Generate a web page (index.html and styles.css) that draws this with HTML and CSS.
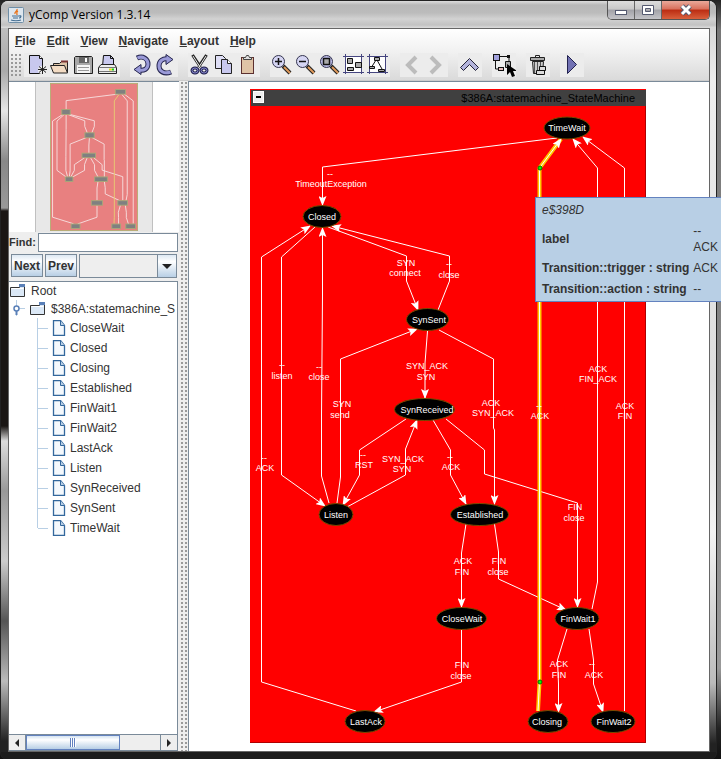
FILE: index.html
```html
<!DOCTYPE html>
<html lang="en">
<head>
    <meta charset="UTF-8">
    <meta name="viewport" content="width=device-width, initial-scale=1.0">
    <title>yComp Version 1.3.14</title>
    <link rel="stylesheet" href="styles.css">
</head>
<body>

<div class="window">
    <header class="titlebar">
        <svg class="app-icon" width="16" height="16" viewBox="0 0 16 16" aria-hidden="true">
            <rect x=".5" y=".5" width="15" height="15" rx="1" fill="#dde6ee" stroke="#6f8ea6"/>
            <path d="M9 2c1 2-3 3-2 5M10 4c-2 1-1 2-1 4" fill="none" stroke="#e8741c" stroke-width="1.3"/>
            <path d="M4 9h7M11 9c3-1 2 2 0 2M5 11h5M3 13c2 1 8 1 10 0" fill="none" stroke="#456f92" stroke-width="1.2"/>
        </svg>
        <h1>yComp Version 1.3.14</h1>
        <div class="window-buttons">
            <button type="button" class="win-min" aria-label="Minimize">
                <svg width="14" height="12" viewBox="0 0 14 12"><rect x="1.5" y="6.500" width="11" height="4" fill="#fff" stroke="#555a70"/></svg>
            </button>
            <button type="button" class="win-max" aria-label="Maximize">
                <svg width="14" height="12" viewBox="0 0 14 12"><path d="M1.500 1.500h11v9h-11zM4.500 4.500v3h5v-3z" fill="#fff" fill-rule="evenodd" stroke="#555a70"/></svg>
            </button>
            <button type="button" class="win-close" aria-label="Close">
                <svg width="14" height="12" viewBox="0 0 14 12"><path d="M3 2l8 8M11 2l-8 8" stroke="#555a70" stroke-width="5"/><path d="M3 2l8 8M11 2l-8 8" stroke="#fff" stroke-width="3"/></svg>
            </button>
        </div>
    </header>

    <div class="client">
        <nav class="menubar">
            <button type="button"><u>F</u>ile</button>
            <button type="button"><u>E</u>dit</button>
            <button type="button"><u>V</u>iew</button>
            <button type="button"><u>N</u>avigate</button>
            <button type="button"><u>L</u>ayout</button>
            <button type="button"><u>H</u>elp</button>
        </nav>

        <div class="toolbar">
            <span class="grip"></span>
            <div class="tool-group">
                <button type="button" aria-label="New">
                    <svg viewBox="0 0 24 24"><path d="M5.500 2.500h10l3 3v15h-13z" fill="#c8c8ee" stroke="#111"/><path d="M15.500 2.500v3h3" fill="#fff" stroke="#111"/><circle cx="18" cy="17" r="4" fill="#eee"/><path d="M18.500 12v9M14 16.500h9M15 13.500l7 6M22 13.500l-7 6" stroke="#222"/></svg>
                </button>
                <button type="button" aria-label="Open">
                    <svg viewBox="0 0 24 24"><path d="M5.500 19.500v-9h6l2-2h6v11z" fill="#ddc4a8" stroke="#222"/><path d="M13 8.500h7" stroke="#7a3232" stroke-width="2"/><path d="M2.500 12.500h14l3 7.500h-14z" fill="#f3dcc4" stroke="#222"/></svg>
                </button>
                <button type="button" aria-label="Save">
                    <svg viewBox="0 0 24 24"><path d="M3.500 3.500h16l1 1v16h-18v-16z" fill="#a8a8a8" stroke="#222"/><path d="M7 4h10v6H7z" fill="#666"/><path d="M13 5h2v4h-2z" fill="#fff"/><path d="M5 12h13v8H5z" fill="#f5f5f5"/><path d="M6 14.500h11M6 17.500h11" stroke="#999"/></svg>
                </button>
                <button type="button" aria-label="Print">
                    <svg viewBox="0 0 24 24"><path d="M6.500 13.500l1-11h7l3 3v8z" fill="#c8c8ee" stroke="#111"/><path d="M14.500 2.500v3h3" fill="none" stroke="#111"/><path d="M5 11.500l-2.500 3v6h18v-6l-2-3z" fill="#eee" stroke="#222"/><path d="M3 14.500h17M3 18.500h17" stroke="#777"/><path d="M13 15.500h3v2h-3z" fill="#dfdf20"/><path d="M16 15.500h2v2h-2z" fill="#16cf16"/></svg>
                </button>
            </div>
            <div class="tool-group">
                <button type="button" aria-label="Undo">
                    <svg viewBox="0 0 24 24"><path d="M7 5c6-3 11 1 11 6s-4 7-9 6" fill="none" stroke="#25254f" stroke-width="5"/><path d="M11 11.500v10l-7-5z" fill="#9a9ad8" stroke="#25254f"/><path d="M7.500 5c5-2.500 10.500 1 10.500 6s-4 7-9 6" fill="none" stroke="#9a9ad8" stroke-width="3"/></svg>
                </button>
                <button type="button" aria-label="Redo">
                    <svg viewBox="0 0 24 24"><path d="M17 19c-7 3-12-1-12-6s4-8 9-7" fill="none" stroke="#25254f" stroke-width="5"/><path d="M12 1.500v10l7-5z" fill="#9a9ad8" stroke="#25254f"/><path d="M16.500 19c-6.500 2.500-11.500-1-11.500-6s4-8 9-7" fill="none" stroke="#9a9ad8" stroke-width="3"/></svg>
                </button>
            </div>
            <div class="tool-group">
                <button type="button" aria-label="Cut">
                    <svg viewBox="0 0 24 24"><path d="M4.500 2l8 12M18.500 2l-8 12" stroke="#222" stroke-width="3"/><path d="M5 3l7 11M18 3l-7 11" stroke="#eee"/><ellipse cx="7" cy="17.500" rx="3" ry="2.500" fill="none" stroke="#22224f" stroke-width="3"/><ellipse cx="16" cy="17.500" rx="3" ry="2.500" fill="none" stroke="#22224f" stroke-width="3"/><ellipse cx="7" cy="17.500" rx="3" ry="2.500" fill="none" stroke="#8888d0"/><ellipse cx="16" cy="17.500" rx="3" ry="2.500" fill="none" stroke="#8888d0"/></svg>
                </button>
                <button type="button" aria-label="Copy">
                    <svg viewBox="0 0 24 24"><path d="M3.500 2.500h7l3 3v10h-10z" fill="#dedef5" stroke="#222"/><path d="M9.500 6.500h6l4 4v10h-10z" fill="#c8c8ee" stroke="#222"/><path d="M15.500 6.500v4h4" fill="#fff" stroke="#222"/></svg>
                </button>
                <button type="button" aria-label="Paste">
                    <svg viewBox="0 0 24 24"><rect x="5.500" y="4.500" width="12" height="16" fill="#dfc3a6" stroke="#5c3030"/><path d="M7.500 6.500v-2h2l1-2h2l1 2h2v2z" fill="#ddd" stroke="#444"/></svg>
                </button>
            </div>
            <div class="tool-group">
                <button type="button" aria-label="Zoom in">
                    <svg viewBox="0 0 24 24"><path d="M13 13l7 7" stroke="#222" stroke-width="4"/><path d="M14 14l6 6" stroke="#e09a5c" stroke-width="2"/><circle cx="8.500" cy="8.500" r="6" fill="#d5d5f3" stroke="#34344f"/><path d="M5 8.500h7M8.500 5v7" stroke="#111" stroke-width="1.500"/></svg>
                </button>
                <button type="button" aria-label="Zoom out">
                    <svg viewBox="0 0 24 24"><path d="M13 13l7 7" stroke="#222" stroke-width="4"/><path d="M14 14l6 6" stroke="#e09a5c" stroke-width="2"/><circle cx="8.500" cy="8.500" r="6" fill="#d5d5f3" stroke="#34344f"/><path d="M5 8.500h7" stroke="#111" stroke-width="1.500"/></svg>
                </button>
                <button type="button" aria-label="Zoom to selection">
                    <svg viewBox="0 0 24 24"><path d="M13 13l7 7" stroke="#222" stroke-width="4"/><path d="M14 14l6 6" stroke="#e09a5c" stroke-width="2"/><circle cx="8.500" cy="8.500" r="6" fill="#bcbce8" stroke="#34344f"/><rect x="5.500" y="5.500" width="6" height="6" fill="#aaa" stroke="#111" stroke-width="1.500"/></svg>
                </button>
                <button type="button" aria-label="Fit content">
                    <svg viewBox="0 0 24 24"><path d="M4 4h15v15H4z" fill="#fff"/><path d="M3.500 1v20M19.500 1v20M1 3.500h21M1 19.500h21" stroke="#45457f"/><path d="M5.500 5.500h5v5h-5zM13.500 9.500h6v5h-6zM5.500 14.500h6v3h-6z" fill="#aaa" stroke="#111"/></svg>
                </button>
                <button type="button" aria-label="Fit nodes">
                    <svg viewBox="0 0 24 24"><path d="M4 4h15v15H4z" fill="#fff"/><path d="M3.500 1v20M19.500 1v20M1 3.500h21M1 19.500h21" stroke="#45457f"/><path d="M10 7l-5 8M11 7l5 9" stroke="#111"/><path d="M8.500 4.500h5v3h-5zM3.500 13.500h5v2h-5zM12.500 16.500h6v2h-6z" fill="#aaa" stroke="#111"/></svg>
                </button>
            </div>
            <div class="tool-group">
                <button type="button" aria-label="Back" disabled>
                    <svg viewBox="0 0 24 24"><path d="M16 4l-8 8 8 8" fill="none" stroke="#bcbcbc" stroke-width="4"/></svg>
                </button>
                <button type="button" aria-label="Forward" disabled>
                    <svg viewBox="0 0 24 24"><path d="M7 4l8 8-8 8" fill="none" stroke="#bcbcbc" stroke-width="4"/></svg>
                </button>
            </div>
            <div class="tool-group">
                <button type="button" aria-label="Up">
                    <svg viewBox="0 0 24 24"><path d="M2.500 14.500l9-9 9 9-3 3-6-6-6 6z" fill="#b4b4dc" stroke="#222238"/></svg>
                </button>
            </div>
            <div class="tool-group">
                <button type="button" aria-label="Edit mode">
                    <svg viewBox="0 0 24 24"><path d="M8 3.500h9v5M3.500 8v8h3" fill="none" stroke="#111"/><rect x="1.500" y="1.500" width="6" height="6" fill="#a0a0dc" stroke="#111"/><rect x="15" y="2" width="3" height="3" fill="#111"/><rect x="6.500" y="14.500" width="5" height="3" fill="#e4bcbc" stroke="#111"/><path d="M13.500 8.500h5v6h-5z" fill="#aaa" stroke="#111"/><path d="M15 11v11l3-3 2 5 3-1-2-5h4z" fill="#000"/></svg>
                </button>
            </div>
            <div class="tool-group">
                <button type="button" aria-label="Delete">
                    <svg viewBox="0 0 24 24"><path d="M9.500 4V2.500h4V4" fill="none" stroke="#222"/><path d="M4.500 4.500h14v3h-14z" fill="#aaa" stroke="#222"/><path d="M6.500 8.500h11l-1 12h-9z" fill="#ccc" stroke="#222"/><path d="M8.500 9v11M11.500 9v11M14.500 9v11" stroke="#555"/><path d="M13.500 13.500h6v4h-6zM10.500 17.500h8v4h-8z" fill="#ddd" stroke="#111"/></svg>
                </button>
            </div>
            <div class="tool-group">
                <button type="button" aria-label="Run layout">
                    <svg viewBox="0 0 24 24"><path d="M7.500 2.500v18l9-9z" fill="#7272b4" stroke="#22224f"/></svg>
                </button>
            </div>
        </div>

        <main class="split">
            <aside class="sidebar">
                <div class="overview">
                    <svg class="overview-map" viewBox="250 89 396 654" preserveAspectRatio="none" aria-label="Overview">
                        <defs>
                            <g id="edges">
                                <polyline points="557,138 322.500,167 322.500,205"/>
                                <polyline points="356,711 261.500,682 261.500,257 310,226"/>
                                <polyline points="315,227 281.500,257 281.500,475 325,506"/>
                                <polyline points="329,503 321.500,476 321.500,415 322.500,295 322.500,228"/>
                                <polyline points="337,503 340.500,477 340.500,359 417,329"/>
                                <polyline points="328,227 406.500,256 406.500,281 418,310"/>
                                <polyline points="438,310 449.500,281 449.500,256 332,226"/>
                                <polyline points="427.500,331 425,363 425,398"/>
                                <polyline points="439,330 493.500,359 493.500,428 494.500,430 494.500,504"/>
                                <polyline points="406,419 359.500,450 359.500,475 343,505"/>
                                <polyline points="347,507 405.500,475 405.500,449 417,420"/>
                                <polyline points="433,420 450.500,450 450.500,475 466,504"/>
                                <polyline points="446,419 484.500,450 484.500,474 577.500,503 577.500,607"/>
                                <polyline points="466,524 461.500,553 461.500,607"/>
                                <polyline points="494.500,524 498.500,552 498.500,579 566,610"/>
                                <polyline points="461.500,630 461.500,682 374,712"/>
                                <polyline points="567,629 557.500,660 558.500,684 558.500,712"/>
                                <polyline points="589,629 593.500,660 593.500,684 603,712"/>
                                <polyline points="592,609 597.500,582 597.500,168 573,139"/>
                                <polyline points="624.500,711 624.500,168 583,137"/>
                            </g>
                            <polyline id="active-edge" points="538,711 539.500,682 539.500,168 561,139"/>
                        </defs>
                        <rect class="map-area" x="252" y="91" width="392" height="650"/>
                        <use class="map-edges" href="#edges"/>
                        <use class="map-active" href="#active-edge"/>
                        <g class="map-nodes">
                            <rect x="544" y="118" width="46" height="20"/>
                            <rect x="303" y="206" width="38" height="22"/>
                            <rect x="407" y="309" width="42" height="22"/>
                            <rect x="394" y="399" width="61" height="20"/>
                            <rect x="319" y="504" width="34" height="20"/>
                            <rect x="451" y="504" width="57" height="20"/>
                            <rect x="436" y="609" width="50" height="20"/>
                            <rect x="555" y="609" width="44" height="20"/>
                            <rect x="345" y="712" width="40" height="20"/>
                            <rect x="528" y="712" width="40" height="20"/>
                            <rect x="591" y="712" width="44" height="20"/>
                        </g>
                    </svg>
                </div>

                <div class="find-row">
                    <label for="find">Find:</label>
                    <input type="text" id="find">
                </div>
                <div class="find-actions">
                    <button type="button">Next</button>
                    <button type="button">Prev</button>
                    <div class="combo">
                        <select aria-label="Search attribute"><option></option></select>
                    </div>
                </div>

                <div class="tree-scroll">
                    <ul class="tree">
                        <li class="folder">
                            <svg width="18" height="14" viewBox="0 0 18 14"><use href="#folder"/></svg>Root
                        </li>
                        <li class="folder nested">
                            <svg class="handle" width="16" height="18" viewBox="0 0 16 18"><path d="M7.500 0v6M7.500 11v5M10 8.500h6" stroke="#b8cfe5"/><path d="M7.500 10v5" stroke="#5a80b8" stroke-width="2"/><circle cx="7.500" cy="8.500" r="2.500" fill="#fff" stroke="#5a80b8" stroke-width="1.500"/></svg>
                            <svg width="18" height="14" viewBox="0 0 18 14"><use href="#folder"/></svg>$386A:statemachine_S
                        </li>
                        <li class="leaf"><svg width="14" height="16" viewBox="0 0 14 16"><use href="#page"/></svg>CloseWait</li>
                        <li class="leaf"><svg width="14" height="16" viewBox="0 0 14 16"><use href="#page"/></svg>Closed</li>
                        <li class="leaf"><svg width="14" height="16" viewBox="0 0 14 16"><use href="#page"/></svg>Closing</li>
                        <li class="leaf"><svg width="14" height="16" viewBox="0 0 14 16"><use href="#page"/></svg>Established</li>
                        <li class="leaf"><svg width="14" height="16" viewBox="0 0 14 16"><use href="#page"/></svg>FinWait1</li>
                        <li class="leaf"><svg width="14" height="16" viewBox="0 0 14 16"><use href="#page"/></svg>FinWait2</li>
                        <li class="leaf"><svg width="14" height="16" viewBox="0 0 14 16"><use href="#page"/></svg>LastAck</li>
                        <li class="leaf"><svg width="14" height="16" viewBox="0 0 14 16"><use href="#page"/></svg>Listen</li>
                        <li class="leaf"><svg width="14" height="16" viewBox="0 0 14 16"><use href="#page"/></svg>SynReceived</li>
                        <li class="leaf"><svg width="14" height="16" viewBox="0 0 14 16"><use href="#page"/></svg>SynSent</li>
                        <li class="leaf"><svg width="14" height="16" viewBox="0 0 14 16"><use href="#page"/></svg>TimeWait</li>
                    </ul>
                    <div class="scrollbar">
                        <button type="button" aria-label="Scroll left"><svg width="6" height="8" viewBox="0 0 6 8"><path d="M5 0v8L1 4z" fill="#222"/></svg></button>
                        <div class="track"><div class="thumb"></div></div>
                        <button type="button" aria-label="Scroll right"><svg width="6" height="8" viewBox="0 0 6 8"><path d="M1 0v8l4-4z" fill="#222"/></svg></button>
                    </div>
                </div>
            </aside>

            <div class="divider"></div>

            <section class="canvas">
                <svg class="graph" width="396" height="654" viewBox="250 89 396 654">
                    <defs>
                        <marker id="arrow" viewBox="0 0 10 8" refX="9" refY="4" markerWidth="10" markerHeight="8" markerUnits="userSpaceOnUse" orient="auto">
                            <path d="M0 0l10 4-10 4 2-4z" fill="#fff" stroke="none"/>
                        </marker>
                        <g id="folder">
                            <path d="M1.500 3.500h9v-2h5v11h-14z" fill="#dbe8f6" stroke="#333"/>
                            <path d="M10 1.500h6" stroke="#5a80b8" stroke-width="3"/>
                            <path d="M2.500 4.500h12" stroke="#fff"/>
                        </g>
                        <g id="page">
                            <path d="M1.500.500h7l4 5v10h-11z" fill="#f5f9fd" stroke="#33679c" stroke-width="1.300"/>
                            <path d="M8.500.500v5h4" fill="#b8cfe5" stroke="#33679c"/>
                        </g>
                    </defs>
                    <rect class="group" x="250" y="89" width="396" height="654"/>
                    <rect class="group-header" x="251" y="90" width="395" height="16"/>
                    <path class="group-shade" d="M645.500 106v636.500H250"/>
                    <g class="toggle">
                        <rect x="253.500" y="91.500" width="10" height="11"/>
                        <path d="M256 97h5"/>
                    </g>
                    <text class="group-title" x="635" y="102">$386A:statemachine_StateMachine</text>

                    <use class="edges" href="#edges"/>
                    <use class="active-glow" href="#active-edge"/>
                    <use class="edges" href="#active-edge"/>
                    <g class="bend">
                        <circle cx="540" cy="168" r="2"/>
                        <circle cx="540" cy="682" r="2"/>
                    </g>

                    <g class="node">
                        <ellipse cx="567" cy="128" rx="23" ry="11"/><text x="567" y="131">TimeWait</text>
                        <ellipse cx="322" cy="216.500" rx="19" ry="11"/><text x="322" y="220">Closed</text>
                        <ellipse cx="427.500" cy="319.500" rx="21" ry="11"/><text x="429" y="323">SynSent</text>
                        <ellipse cx="424.500" cy="409.500" rx="30" ry="11"/><text x="427" y="413">SynReceived</text>
                        <ellipse cx="336" cy="514.500" rx="17" ry="11"/><text x="336" y="518">Listen</text>
                        <ellipse cx="479.500" cy="514.500" rx="29" ry="11"/><text x="480" y="518">Established</text>
                        <ellipse cx="461.500" cy="618.500" rx="25" ry="11"/><text x="462" y="622">CloseWait</text>
                        <ellipse cx="577" cy="618.500" rx="22" ry="11"/><text x="578" y="622">FinWait1</text>
                        <ellipse cx="365" cy="721.500" rx="20" ry="11"/><text x="366" y="725">LastAck</text>
                        <ellipse cx="548" cy="721.500" rx="20" ry="11"/><text x="547" y="725">Closing</text>
                        <ellipse cx="613" cy="721.500" rx="22" ry="11"/><text x="614" y="725">FinWait2</text>
                    </g>

                    <g class="edge-label">
                        <text x="330" y="177">--</text><text x="331" y="187">TimeoutException</text>
                        <text x="406" y="266">SYN</text><text x="405" y="276">connect</text>
                        <text x="449" y="267">--</text><text x="449" y="278">close</text>
                        <text x="282" y="368">--</text><text x="282" y="379">listen</text>
                        <text x="319" y="370">--</text><text x="319" y="380">close</text>
                        <text x="342" y="407">SYN</text><text x="340" y="418">send</text>
                        <text x="427" y="369">SYN_ACK</text><text x="426" y="380">SYN</text>
                        <text x="491" y="406">ACK</text><text x="493" y="416">SYN_ACK</text>
                        <text x="264" y="461">--</text><text x="265" y="471">ACK</text>
                        <text x="363" y="458">--</text><text x="364" y="468">RST</text>
                        <text x="403" y="462">SYN_ACK</text><text x="402" y="472">SYN</text>
                        <text x="450" y="460">--</text><text x="451" y="470">ACK</text>
                        <text x="539" y="409">--</text><text x="540" y="419">ACK</text>
                        <text x="598" y="372">ACK</text><text x="598" y="382">FIN_ACK</text>
                        <text x="625" y="409">ACK</text><text x="625" y="419">FIN</text>
                        <text x="575" y="510">FIN</text><text x="574" y="521">close</text>
                        <text x="463" y="564">ACK</text><text x="462" y="575">FIN</text>
                        <text x="499" y="564">FIN</text><text x="498" y="575">close</text>
                        <text x="462" y="668">FIN</text><text x="461" y="679">close</text>
                        <text x="559" y="667">ACK</text><text x="559" y="678">FIN</text>
                        <text x="592" y="667">--</text><text x="594" y="678">ACK</text>
                    </g>
                </svg>
            </section>
        </main>
    </div>
</div>

<div class="tooltip" role="tooltip">
    <table>
        <tr><td colspan="2"><i>e$398D</i></td></tr>
        <tr><th scope="row">label</th><td>--<br>ACK</td></tr>
        <tr><th scope="row">Transition::trigger : string</th><td>ACK</td></tr>
        <tr><th scope="row">Transition::action : string</th><td>--</td></tr>
    </table>
</div>

</body>
</html>
```
FILE: styles.css
```css
* {
    box-sizing: border-box;
}
body {
    margin: 0;
    font-family: "Liberation Sans", Arial, sans-serif;
    font-size: 12px;
    color: #333;
    background: linear-gradient(#222, #777 30px, #888 60%, #999 88%, #222 96%, #111);
}
button {
    margin: 0;
    padding: 0;
    border: none;
    background: none;
    font: bold 12px "Liberation Sans", Arial, sans-serif;
    color: #333;
}

/* Window frame */
.window {
    display: flex;
    flex-direction: column;
    min-height: 100vh;
    margin-right: 4px;
    padding: 0 6px 7px 7px;
    border: 1px solid #222;
    border-width: 1px 1px 0 1px;
    border-radius: 8px 8px 6px 6px;
    background:
        linear-gradient(#1c1c1c, #1c1c1c) bottom / 100% 7px no-repeat,
        linear-gradient(#ccc, #aaa 70px, #e6e6e6 110px, #888 160px, #999 207px, #1a1614 210px, #1a1614 425px, #ddd 440px, #999 490px, #ccc 560px, #555 620px, #bbb 680px, #222 740px) left / 7px 100% no-repeat,
        linear-gradient(#ccc, #eee 80px, #ddd 50%, #f4f4f4 70%, #bbb 90%, #222 98%);
}
.titlebar {
    display: flex;
    align-items: center;
    height: 27px;
    margin: 0 -6px 0 -7px;
    padding-left: 7px;
    border-radius: 7px 7px 0 0;
    background: linear-gradient(#ddd, #b8b8b8 4px, #bcbcbc 12px, #d2d2d2 18px, #c2c2c2 24px, #ddd);
}
.titlebar h1 {
    flex: 1;
    margin: 0 0 0 5px;
    font: 12px "Open Sans", "Noto Sans", sans-serif;
    color: #000;
}
.window-buttons {
    display: flex;
    align-self: flex-start;
    margin-right: 6px;
    border: 1px solid #555;
    border-top: none;
    border-radius: 0 0 5px 5px;
    overflow: hidden;
}
.window-buttons button {
    display: flex;
    align-items: center;
    justify-content: center;
    width: 27px;
    height: 18px;
    border-right: 1px solid #666;
    background: linear-gradient(#ddd, #c8c8c8 45%, #a2a2a8 50%, #c4c4c8);
}
.window-buttons .win-close {
    width: 47px;
    border-right: none;
    background: linear-gradient(#e9a99a, #d8705c 45%, #bb2c12 50%, #d9603c);
}

/* Client area */
.client {
    display: flex;
    flex: 1;
    flex-direction: column;
    border: 1px solid #666;
    background: #eee;
}
.menubar {
    display: flex;
    gap: 11px;
    height: 24px;
    padding: 0 6px;
    background: linear-gradient(#fff, #f0f0f0);
}
.toolbar {
    display: flex;
    gap: 10px;
    height: 28px;
    padding: 0 1px;
    border-bottom: 1px solid #ccc;
    background: linear-gradient(#f0f0f0, #dadada);
}
.grip {
    width: 11px;
    height: 24px;
    margin-right: -7px;
    background: radial-gradient(#999 25%, transparent 30%) 0 0 / 4px 4px;
}
.tool-group {
    display: flex;
    height: 24px;
}
.tool-group button {
    width: 24px;
    height: 24px;
    background: #ececec;
}
.tool-group svg {
    display: block;
    width: 24px;
    height: 24px;
    fill: none;
}
.split {
    display: flex;
    flex: 1;
}

/* Sidebar */
.sidebar {
    display: flex;
    flex-direction: column;
    width: 170px;
    border-top: 1px solid #7a8a99;
}
.overview {
    height: 150px;
    padding: 0 26px;
    background: #fff;
}
.overview-map {
    display: block;
    width: 118px;
    height: 150px;
    padding: 1px 14px;
    border: 1px solid #c0c0c0;
    border-width: 0 1px;
    background: #e8e8e8;
}
.map-area {
    fill: #e88080;
    stroke: #b4ad72;
    stroke-width: 4px;
}
.map-edges,
.map-active {
    fill: none;
    stroke: #f7e2e2;
    stroke-width: 4px;
}
.map-active {
    stroke: #e8cf72;
}
.map-nodes {
    fill: #808080;
    stroke: #a8a878;
    stroke-width: 4px;
}
.find-row {
    display: flex;
    align-items: center;
    height: 20px;
}
.find-row label {
    width: 29px;
    font-size: 11px;
    font-weight: bold;
}
.find-row input {
    flex: 1;
    min-width: 0;
    height: 19px;
    margin-right: 1px;
    border: 1px solid #7a8a99;
    background: #fff;
}
.find-actions {
    display: flex;
    gap: 2px;
    height: 29px;
    padding: 2px 2px 3px;
}
.find-actions button {
    width: 32px;
    height: 23px;
    border: 1px solid #7a8a99;
    background: linear-gradient(#dde8f3, #fff 30%, #b8cfe5);
}
.combo {
    display: flex;
    position: relative;
    flex: 1;
}
.combo select {
    width: 100%;
    height: 24px;
    border: 1px solid #7a8a99;
    border-radius: 0;
    appearance: none;
    background:
        linear-gradient(#7a8a99, #7a8a99) right 18px top / 1px 100% no-repeat,
        linear-gradient(#dde8f3, #fff 30%, #b8cfe5) right / 18px 100% no-repeat,
        #eee;
}
.combo::after {
    content: "";
    position: absolute;
    top: 10px;
    right: 5px;
    border: 5px solid transparent;
    border-top-color: #222;
    border-bottom: none;
}
.tree-scroll {
    display: flex;
    flex: 1;
    flex-direction: column;
    margin-right: 1px;
    border: 1px solid #7a8a99;
    border-left: none;
    background: #fff;
}
.tree {
    flex: 1;
    margin: 0;
    padding: 0;
    overflow: hidden;
    list-style: none;
    white-space: nowrap;
}
.tree li {
    display: flex;
    align-items: center;
    gap: 4px;
}
.tree svg {
    flex: none;
}
.folder {
    height: 18px;
}
.leaf {
    height: 20px;
    margin-left: 28px;
    border-left: 1px solid #b8cfe5;
}
.leaf::before {
    content: "";
    width: 10px;
    height: 1px;
    background: #b8cfe5;
}
.leaf:last-child {
    border-left-color: transparent;
    background: linear-gradient(#b8cfe5, #b8cfe5) left top / 1px 50% no-repeat border-box;
}
.scrollbar {
    display: flex;
    height: 16px;
    border-top: 1px solid #7a8a99;
    background: #eee;
}
.scrollbar button {
    width: 16px;
}
.track {
    flex: 1;
    border: 1px solid #7a8a99;
    border-width: 0 1px;
}
.thumb {
    width: 70%;
    height: 100%;
    border: 1px solid #6382bf;
    background:
        repeating-linear-gradient(90deg, #6382bf 0 1px, #fff 1px 2px) center / 6px 9px no-repeat,
        linear-gradient(#d5e3f1, #fff 30%, #b8cfe5);
}
.divider {
    width: 10px;
    border-right: 1px solid #7a8a99;
    background: radial-gradient(#999 25%, transparent 30%) 1px 0 / 4px 4px #eee;
}

/* Graph */
.canvas {
    display: flex;
    flex: 1;
    justify-content: center;
    padding: 7px 2px 8px 0;
    border-top: 1px solid #7a8a99;
    background: #fff;
}
.graph {
    font-size: 9px;
}
.group {
    fill: #f00;
}
.group-header {
    fill: #404040;
}
.group-shade {
    fill: none;
    stroke: #b00000;
}
.group-title {
    font-size: 11px;
    text-anchor: end;
    fill: #000;
}
.toggle rect {
    fill: #eee;
    stroke: #fff;
}
.toggle path {
    stroke: #000;
    stroke-width: 2px;
}
.edges {
    fill: none;
    stroke: #fff;
    marker-end: url(#arrow);
}
.active-glow {
    fill: none;
    stroke: #ffc800;
    stroke-width: 4px;
}
.bend circle {
    fill: #0f0;
    stroke: #0a640a;
}
.node ellipse {
    fill: #000;
    stroke: #7a4a00;
}
.node text,
.edge-label text {
    text-anchor: middle;
    fill: #fff;
}

/* Lies over the canvas and runs off the window's edge */
.tooltip {
    position: absolute;
    top: 197px;
    right: 0;
    border: 1px solid #6382bf;
    border-right: none;
    background: #b8cfe5;
}
.tooltip table {
    border-spacing: 2px 3px;
    margin-left: 3px;
}
.tooltip th,
.tooltip td {
    padding: 1px;
    line-height: 16px;
    text-align: left;
}
```
